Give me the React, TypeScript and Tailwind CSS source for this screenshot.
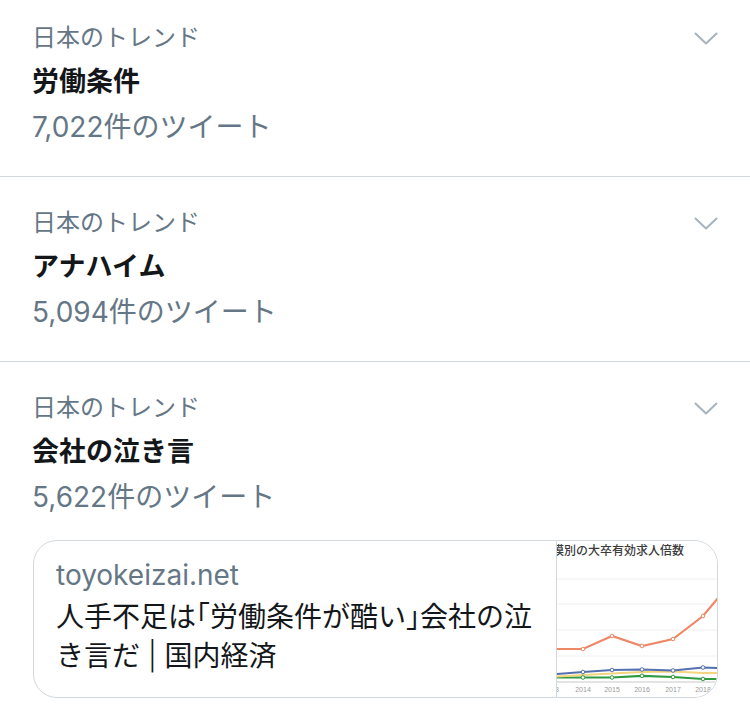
import React from "react";

const FONT = "font-['Inter','Noto_Sans_CJK_JP',sans-serif]";

function Chevron() {
  return (
    <svg width="24" height="13" viewBox="0 0 24 13" className="shrink-0">
      <polyline points="1.5,1.5 12,11.5 22.5,1.5" fill="none" stroke="#a7b3bd" strokeWidth="2" strokeLinecap="round" strokeLinejoin="round" />
    </svg>
  );
}

function Trend({ first, title, count, children }: { first?: boolean; title: string; count: string; children?: React.ReactNode }) {
  return (
    <div className={`${first ? "pt-[22px]" : "pt-[30px]"} pl-[32px] pr-[32px]`}>
      <div className="flex items-center justify-between">
        <div className="text-[24px] leading-[32px] text-[#657786]">日本のトレンド</div>
        <Chevron />
      </div>
      <div className="mt-[8px] text-[27px] leading-[40px] font-bold text-[#14171a]">{title}</div>
      <div className="mt-[5px] text-[28px] leading-[40px] text-[#657786]">{count}</div>
      {children}
    </div>
  );
}

function Chart() {
  const xs = [0, 26, 55, 85, 116, 146, 161];
  const orange = [108, 108, 95, 105, 98, 75, 57];
  const blue = [133, 131, 129, 128.5, 129.5, 126.5, 127];
  const yellow = [135.5, 134, 132.5, 131, 130.5, 132, 132];
  const green = [136.5, 136.5, 136.5, 134.8, 136, 138, 138];
  const pts = (ys: number[]) => xs.map((x, i) => `${x},${ys[i]}`).join(" ");
  const markers = (ys: number[], c: string) =>
    xs.slice(1, 6).map((x, i) => <circle key={x} cx={x} cy={ys[i + 1]} r="1.8" fill="#fff" stroke={c} strokeWidth="1" />);
  return (
    <svg width="161" height="156" viewBox="0 0 161 156" className="block">
      <rect width="161" height="156" fill="#ffffff" />
      {[38, 63, 89, 115].map((y) => (
        <line key={y} x1="0" x2="161" y1={y} y2={y} stroke="#f0f0f0" strokeWidth="1" />
      ))}
      <line x1="0" x2="161" y1="141" y2="141" stroke="#c8c8c8" strokeWidth="1" />
      <text x="-17" y="14" fontSize="12" fill="#3c3c3c" fontWeight="500" fontFamily="'Noto Sans CJK JP', sans-serif">規模別の大卒有効求人倍数</text>
      <polyline points={pts(green)} fill="none" stroke="#2f9a40" strokeWidth="2.2" />
      <polyline points={pts(yellow)} fill="none" stroke="#f3d57e" strokeWidth="2.2" />
      <polyline points={pts(blue)} fill="none" stroke="#5470b0" strokeWidth="2" />
      <polyline points={pts(orange)} fill="none" stroke="#ef8868" strokeWidth="2.2" />
      {markers(orange, "#ef8868")}
      {markers(blue, "#5470b0")}
      {markers(green, "#2f9a40")}
      {["2014", "2015", "2016", "2017", "2018"].map((t, i) => (
        <text key={t} x={xs[i + 1]} y="151" fontSize="7" fill="#9a9a9a" textAnchor="middle" fontFamily="'Liberation Sans', sans-serif">{t}</text>
      ))}
      <text x="0" y="151" fontSize="7" fill="#9a9a9a" textAnchor="middle" fontFamily="'Liberation Sans', sans-serif">3</text>
    </svg>
  );
}

export default function App() {
  return (
    <div className={`w-[750px] h-[718px] bg-white overflow-hidden ${FONT}`}>
      <Trend first title="労働条件" count="7,022件のツイート">
        <div className="h-[29px]" />
      </Trend>
      <div className="h-px bg-[#d3d8dc]" />
      <Trend title="アナハイム" count="5,094件のツイート">
        <div className="h-[29px]" />
      </Trend>
      <div className="h-px bg-[#d3d8dc]" />
      <Trend title="会社の泣き言" count="5,622件のツイート">
        <div className="mt-[23px] ml-[1px] flex h-[158px] rounded-[24px] border border-[#d3d8dc] overflow-hidden">
          <div className="flex-1 pl-[22px] pr-[10px] pt-[16px]">
            <div className="text-[28px] leading-[36px] text-[#657786]">toyokeizai.net</div>
            <div className="mt-[5px] text-[28px] leading-[39px] text-[#14171a]">
              人手不足は<span className="[font-feature-settings:'halt']">「</span>労働条件が酷い<span className="[font-feature-settings:'halt']">」</span>会社の泣き言だ <span className="font-light">|</span> 国内経済
            </div>
          </div>
          <div className="w-[161px] border-l border-[#d3d8dc] shrink-0">
            <Chart />
          </div>
        </div>
      </Trend>
    </div>
  );
}
